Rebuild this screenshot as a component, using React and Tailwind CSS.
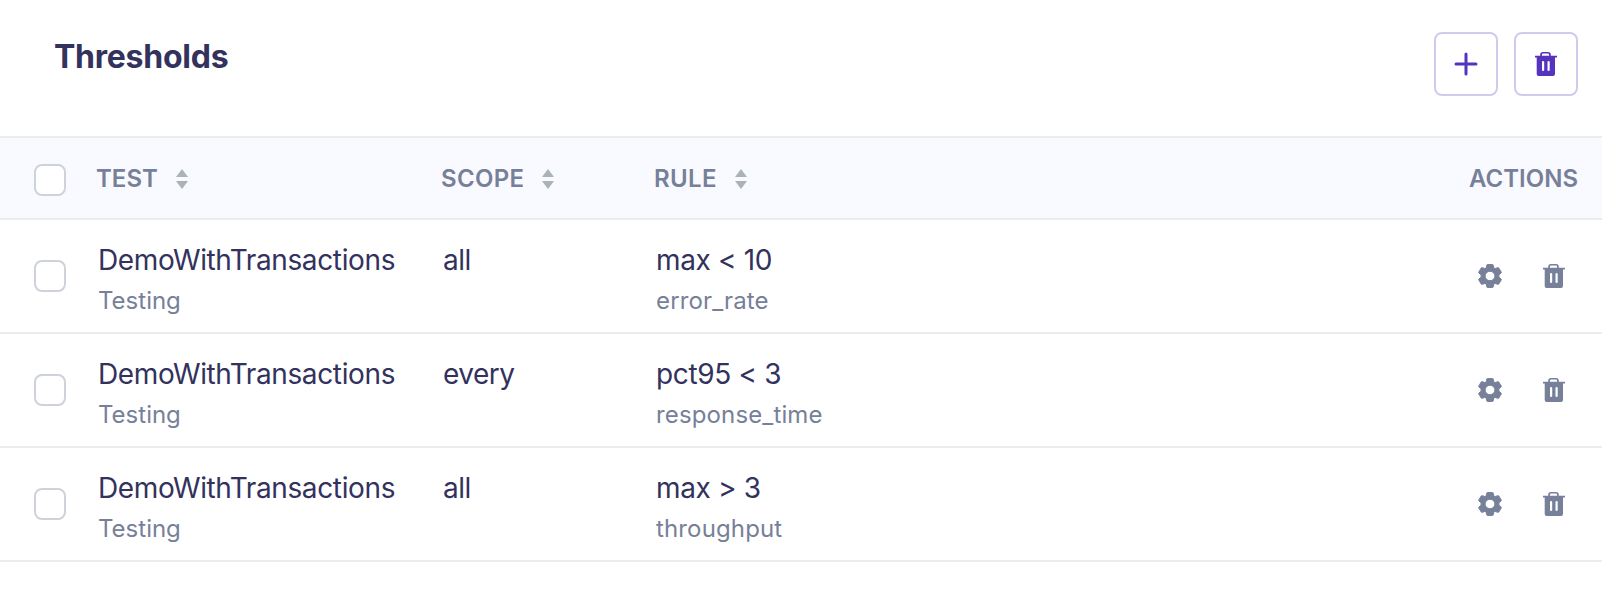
const rows = [
  { test: "DemoWithTransactions", project: "Testing", scope: "all", rule: "max < 10", metric: "error_rate" },
  { test: "DemoWithTransactions", project: "Testing", scope: "every", rule: "pct95 < 3", metric: "response_time" },
  { test: "DemoWithTransactions", project: "Testing", scope: "all", rule: "max > 3", metric: "throughput" },
];

const columns = "grid grid-cols-[97px_345px_213px_1fr_auto]";

function PlusIcon() {
  return (
    <svg width="24" height="24" viewBox="0 0 24 24" fill="none" stroke="currentColor" strokeWidth="3" strokeLinecap="round">
      <path d="M12 2v20M2 12h20" />
    </svg>
  );
}

function TrashIcon() {
  return (
    <svg width="24" height="24" viewBox="0 0 24 24" fill="currentColor" fillRule="evenodd">
      <path d="M1 3.800H6.200V2.800A2.800 2.800 0 0 1 9 0h5a2.800 2.800 0 0 1 2.800 2.800v1H23V5.600H21V22a2 2 0 0 1-2 2H4.700a2 2 0 0 1-2-2V5.600H1ZM7.900 3.800h7.200V2.900a1.300 1.300 0 0 0-1.300-1.300H9.200A1.300 1.300 0 0 0 7.900 2.900ZM9.100 9a1.100 1.100 0 0 0-1.100 1.100v7.800a1.100 1.100 0 0 0 2.200 0v-7.800A1.100 1.100 0 0 0 9.100 9ZM14.600 9a1.100 1.100 0 0 0-1.100 1.100v7.800a1.100 1.100 0 0 0 2.200 0v-7.800A1.100 1.100 0 0 0 14.600 9Z" />
    </svg>
  );
}

function GearIcon() {
  return (
    <svg width="24" height="24" viewBox="0 -0.5 24 25" preserveAspectRatio="none" fill="currentColor" fillRule="evenodd" stroke="currentColor" strokeWidth="1" strokeLinejoin="round">
      <path d="M9.600 0h4.800a.9.9 0 0 1 .9.800l.4 2.600 1.500.9 2.500-1a.9.9 0 0 1 1.100.4l2.400 4.100a.9.9 0 0 1-.2 1.200l-2.100 1.700v2.600l2.100 1.700a.9.9 0 0 1 .2 1.200l-2.400 4.100a.9.9 0 0 1-1.100.4l-2.500-1-1.500.9-.4 2.600a.9.9 0 0 1-.9.800H9.600a.9.9 0 0 1-.9-.8l-.4-2.600-1.500-.9-2.500 1a.9.9 0 0 1-1.100-.4L.8 16.200A.9.9 0 0 1 1 15l2.100-1.700v-2.600L1 9a.9.9 0 0 1-.2-1.200l2.400-4.100a.9.9 0 0 1 1.100-.4l2.500 1 1.500-.9.4-2.600A.9.900 0 0 1 9.600 0ZM12 7.100a4.900 4.900 0 1 0 0 9.800 4.900 4.900 0 0 0 0-9.800Z" />
    </svg>
  );
}

function SortIcon() {
  return (
    <svg width="12" height="20" viewBox="0 0 12 20" fill="#abb3b5">
      <path d="M6 0l6 8H0ZM6 20l6-8H0Z" />
    </svg>
  );
}

function Checkbox({ label }) {
  return (
    <button role="checkbox" aria-checked="false" aria-label={label} className="block size-8 rounded-lg border-2 border-[#ced2d9] bg-white" />
  );
}

function SortHeader({ children, className }) {
  return (
    <div className="flex items-center pt-0.5">
      <span className={className}>{children}</span>
      <SortIcon />
    </div>
  );
}

function ToolButton({ label, children }) {
  return (
    <button aria-label={label} className="flex size-16 items-center justify-center rounded-lg border-2 border-[#d2caee] text-[#5533bf]">
      {children}
    </button>
  );
}

function Row({ row }) {
  return (
    <div className={`${columns} h-[114px] border-b-2 border-[#ebecee]`}>
      <div className="flex items-center pl-[34px]">
        <Checkbox label="Select row" />
      </div>
      <div className="pt-5 pl-px">
        <div className="text-[28px] leading-10 tracking-[-0.37px] text-[#32325d]">{row.test}</div>
        <div className="text-2xl leading-[42px] text-[#778099]">{row.project}</div>
      </div>
      <div className="pt-5 pl-px text-[28px] leading-10 tracking-[-0.5px] text-[#32325d]">{row.scope}</div>
      <div className="pt-5 pl-px whitespace-nowrap">
        <div className="text-[28px] leading-10 tracking-[-0.35px] text-[#32325d]">{row.rule}</div>
        <div className="text-2xl leading-[42px] tracking-[0.14px] text-[#778099]">{row.metric}</div>
      </div>
      <div className="flex items-center gap-10 pr-9 text-[#778099]">
        <button aria-label="Settings"><GearIcon /></button>
        <button aria-label="Delete"><TrashIcon /></button>
      </div>
    </div>
  );
}

export default function App() {
  return (
    <main className="h-[614px] w-full overflow-hidden bg-white font-['Inter',sans-serif]">
      <header className="flex h-[136px] items-start justify-between pr-6 pl-[54px]">
        <h1 className="pt-[37px] text-[32px] leading-10 font-bold tracking-[-0.25px] text-[#32325d]">Thresholds</h1>
        <div className="flex gap-4 pt-8">
          <ToolButton label="Add"><PlusIcon /></ToolButton>
          <ToolButton label="Delete"><TrashIcon /></ToolButton>
        </div>
      </header>
      <div className={`${columns} h-[84px] border-y-2 border-[#ebecee] bg-[#f9faff] text-2xl font-semibold text-[#778099]`}>
        <div className="pt-[26px] pl-[34px]">
          <Checkbox label="Select all" />
        </div>
        <SortHeader className="-ml-px w-20">TEST</SortHeader>
        <SortHeader className="-ml-px w-[101px] tracking-[0.3px]">SCOPE</SortHeader>
        <SortHeader className="-ml-px w-[81px] tracking-[0.4px]">RULE</SortHeader>
        <div className="flex items-center pt-0.5 pr-6">ACTIONS</div>
      </div>
      {rows.map((row, i) => <Row key={i} row={row} />)}
    </main>
  );
}
